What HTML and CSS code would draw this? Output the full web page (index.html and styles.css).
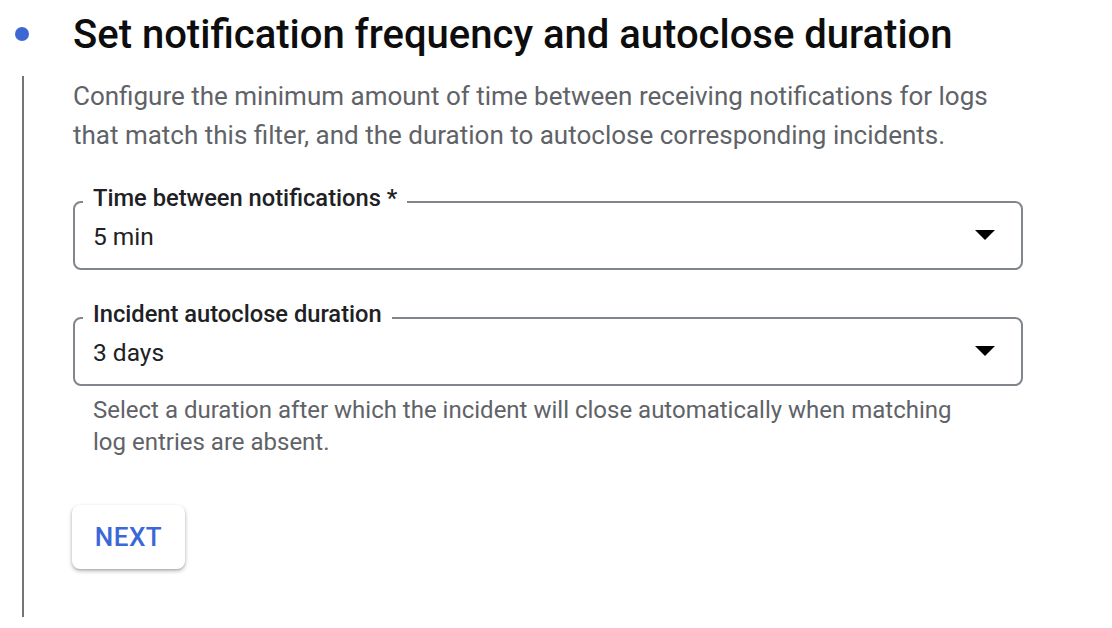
FILE: index.html
```html
<!DOCTYPE html>
<html lang="en">
<head>
<meta charset="utf-8">
<title>Set notification frequency and autoclose duration</title>
<link rel="stylesheet" href="styles.css">
</head>
<body>
<section class="step">
  <header class="step-header">
    <span class="step-dot"></span>
    <h2 class="step-title">Set notification frequency and autoclose duration</h2>
  </header>
  <div class="step-body">
    <p class="step-desc">Configure the minimum amount of time between receiving notifications for logs that match this filter, and the duration to autoclose corresponding incidents.</p>

    <fieldset class="field">
      <legend class="field-label">Time between notifications *</legend>
      <div class="field-row">
        <span class="field-value">5 min</span>
        <svg class="field-arrow" width="20" height="10" viewBox="0 0 20 10"><path d="M0 0H20L10 10Z" fill="#000"/></svg>
      </div>
    </fieldset>

    <fieldset class="field field-second">
      <legend class="field-label">Incident autoclose duration</legend>
      <div class="field-row">
        <span class="field-value">3 days</span>
        <svg class="field-arrow" width="20" height="10" viewBox="0 0 20 10"><path d="M0 0H20L10 10Z" fill="#000"/></svg>
      </div>
    </fieldset>
    <p class="field-hint">Select a duration after which the incident will close automatically when matching log entries are absent.</p>

    <button class="next-btn" type="button">NEXT</button>
  </div>
</section>
</body>
</html>
```

FILE: styles.css
```css
html, body {
  margin: 0;
  padding: 0;
  background: #ffffff;
}

body {
  font-family: Roboto, "Liberation Sans", Arial, sans-serif;
  color: #202124;
}

.step {
  width: 1112px;
  height: 628px;
  box-sizing: border-box;
  padding-top: 11px;
}

.step-header {
  display: flex;
  align-items: center;
  height: 48px;
}

.step-dot {
  width: 14px;
  height: 14px;
  border-radius: 50%;
  background: #3f67d4;
  margin-left: 15px;
  margin-right: 44px;
  margin-top: -2px;
  flex: none;
}

.step-title {
  margin: 0;
  font-size: 40px;
  line-height: 48px;
  font-weight: 500;
  color: #0d0d0d;
  white-space: nowrap;
}

.step-body {
  margin-left: 22px;
  margin-top: 17px;
  border-left: 2px solid #757575;
  padding-left: 49px;
  height: 541px;
  box-sizing: border-box;
  padding-top: 1px;
}

.step-desc {
  margin: 0;
  font-size: 26px;
  line-height: 39px;
  color: #5f6368;
  width: 940px;
}

.field {
  margin: 31px 0 0 0;
  width: 950px;
  box-sizing: border-box;
  border: 2px solid #80868b;
  border-radius: 8px;
  padding: 8px 26px 19px 18px;
  min-width: 0;
}

.field-second {
  margin-top: 32px;
}

.field-label {
  font-size: 23.7px;
  line-height: 24px;
  font-weight: 500;
  color: #202124;
  padding: 0 10px 7px 10px;
  margin-left: -10px;
}

.field-row {
  display: flex;
  align-items: center;
  height: 24px;
}

.field-value {
  flex: 1;
  font-size: 24.5px;
  line-height: 24px;
  color: #202124;
}

.field-arrow {
  flex: none;
  margin-top: -4px;
}

.field-hint {
  margin: 8px 0 0 0;
  padding-left: 20px;
  font-size: 24px;
  line-height: 32px;
  color: #5f6368;
  max-width: 880px;
}

.next-btn {
  display: block;
  margin-top: 47px;
  margin-left: -1px;
  width: 113px;
  height: 64px;
  border: none;
  border-radius: 8px;
  background: #ffffff;
  box-shadow: 0 2px 4px rgba(0, 0, 0, 0.28), 0 1px 2px rgba(0, 0, 0, 0.12);
  font-family: Roboto, "Liberation Sans", Arial, sans-serif;
  font-size: 26px;
  font-weight: 500;
  color: #3c67d6;
  letter-spacing: 0.5px;
  padding: 0;
  cursor: pointer;
}
```
